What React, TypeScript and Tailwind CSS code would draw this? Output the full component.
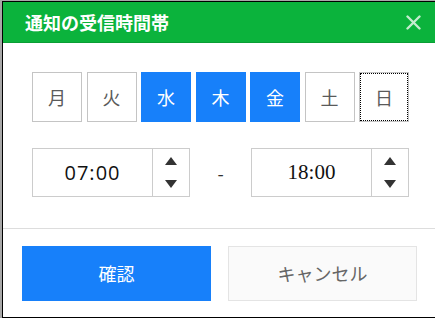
import { useState } from 'react'

const DAYS = ['月', '火', '水', '木', '金', '土', '日'] as const
const SANS = "font-['Noto_Sans_CJK_JP','Noto_Sans',sans-serif]"

function Spinner() {
  return (
    <div className="flex w-[37px] flex-col items-center justify-center gap-[15px] border-l border-[#cccccc]">
      <svg width="12" height="8" viewBox="0 0 12 8">
        <path d="M6 0 L12 8 L0 8 Z" fill="#333333" />
      </svg>
      <svg width="12" height="8" viewBox="0 0 12 8">
        <path d="M0 0 L12 0 L6 8 Z" fill="#333333" />
      </svg>
    </div>
  )
}

function TimeBox({ value, serif }: { value: string; serif?: boolean }) {
  return (
    <div className="flex h-[49px] w-[158px] border border-[#cccccc] bg-white">
      <div
        className={`flex flex-1 items-center justify-center leading-none text-[#111] ${
          serif
            ? "font-['Liberation_Serif',serif] text-[21px]"
            : "font-['Open_Sans','Noto_Sans',sans-serif] text-[20px] tracking-[1px]"
        }`}
      >
        {value}
      </div>
      <Spinner />
    </div>
  )
}

export default function App() {
  const [selected, setSelected] = useState<string[]>(['水', '木', '金'])

  return (
    <div className={`h-[319px] w-[435px] overflow-hidden bg-white ${SANS}`}>
      <div className="h-[318px] bg-[#a8a8a8] pl-[2px] pt-[1px]">
        <div className="flex h-[317px] w-[435px] flex-col border-y border-l border-black bg-white">
          <div className="flex h-[41px] shrink-0 items-center justify-between border-b border-[#0a9e35] bg-[#0bb33c] pl-[22px] pr-[12px]">
            <h1 className="text-[18px] font-bold leading-none text-white">通知の受信時間帯</h1>
            <svg width="15" height="15" viewBox="0 0 15 15" className="mr-[4px]">
              <path
                d="M1.5 1.5 L13.5 13.5 M13.5 1.5 L1.5 13.5"
                stroke="#c4ecce"
                strokeWidth="2.4"
                strokeLinecap="round"
              />
            </svg>
          </div>

          <div className="mt-[29px] flex gap-[4.5px] pl-[29px]">
            {DAYS.map((d) => {
              const on = selected.includes(d)
              return (
                <button
                  key={d}
                  type="button"
                  onClick={() =>
                    setSelected(on ? selected.filter((x) => x !== d) : [...selected, d])
                  }
                  className={`flex h-[50px] w-[50px] items-center justify-center text-[18px] leading-none ${
                    on
                      ? 'bg-[#1780fa] text-white'
                      : 'border border-[#c4c4c4] bg-white text-[#5a5a5a]'
                  } ${d === '日' ? 'outline-1 -outline-offset-2 outline-black outline-dotted' : ''}`}
                >
                  {d}
                </button>
              )
            })}
          </div>

          <div className="mt-[26px] flex items-center pl-[29px]">
            <TimeBox value="07:00" />
            <span className="w-[61px] text-center text-[18px] leading-none text-[#333]">-</span>
            <TimeBox value="18:00" serif />
          </div>

          <div className="mt-[31px] h-px bg-[#dddddd]" />

          <div className="mt-[17px] flex gap-[17px] pl-[19px]">
            <button
              type="button"
              className="flex h-[55px] w-[189px] items-center justify-center bg-[#1780fa] text-[18px] text-white"
            >
              確認
            </button>
            <button
              type="button"
              className="flex h-[55px] w-[189px] items-center justify-center border border-[#e4e4e4] bg-[#fafafa] text-[18px] text-[#666666]"
            >
              キャンセル
            </button>
          </div>
        </div>
      </div>
    </div>
  )
}
